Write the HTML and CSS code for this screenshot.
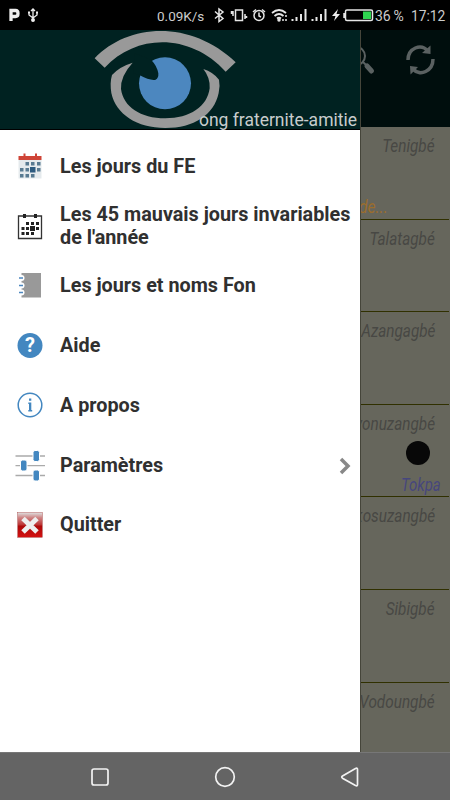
FILE: index.html
```html
<!DOCTYPE html>
<html lang="fr">
<head>
<meta charset="utf-8">
<title>ong fraternite-amitie</title>
<link rel="stylesheet" href="styles.css">
</head>
<body>
<div class="phone">
  <header class="status">
    <svg class="status-left" width="45" height="30" viewBox="0 0 45 30" fill="none" stroke="#eee" stroke-width="1.3">
      <path d="M11 21V10.500H15.500Q18 10.500 18 13.500T15.500 16.500H12" stroke-width="3.300"/>
      <path d="M33 10V20M29 12V15L33 18L37 15V12M31 11L33 9L35 11"/><circle cx="33" cy="20" r="1.300" fill="#eee"/><path d="M28 12.500H30M36 12.500H38" stroke-width="2"/>
    </svg>
    <span class="speed">0.09K/s</span>
    <svg class="status-icons" width="167" height="30" viewBox="208 0 167 30" fill="none" stroke="#e6e6e6" stroke-width="1.500">
      <path d="M215 11.500L223 18.500L219 21.500V9L223 12L215 18.500"/>
      <path d="M235.500 10H242.500V20.500H235.500ZM233 11V16M231.500 11V14M245 14V19M246.500 16V18"/>
      <circle cx="259" cy="15.500" r="5"/><path d="M259 12.500V16L261 17M253 12L256 9.500M265 12L262 9.500"/>
      <path d="M272 13Q279 7 286 13M274.500 16Q279 12 283.500 16M277 18.500Q279 17 281 18.500" stroke-width="1.800"/><circle cx="279" cy="20" r="1" fill="#eee"/><path d="M286 15V17M286 19V21M283 19V21"/>
      <path d="M292.500 19V21M296.500 17V21M301 14V21M305.500 9V21M312.500 19V21M316.500 17V21M321 14V21M325.500 9V21" stroke-width="2"/>
      <path d="M338 9L332 16H335.500L334 21L340 14H336.500Z" fill="#eee" stroke="none"/>
      <path d="M347 10H371Q372.500 10 372.500 11.500V19Q372.500 20.500 371 20.500H347Q345.500 20.500 345.500 19V11.500Q345.500 10 347 10ZM344 13V18"/>
      <path d="M363 11.500H371V19H363Z" fill="#2fd550" stroke="none"/>
    </svg>
    <span class="percent">36 %</span>
    <span class="time">17:12</span>
  </header>
  <main class="content">
    <aside class="drawer">
      <div class="banner">
        <svg class="eye" width="170" height="100" viewBox="0 15 510 300">
          <path fill="#999" d="M44 100C145 -6 333 -16 467 112L437 140C335 26 172 22 74 128Z"/>
          <path fill="#999" d="M158 113Q118 125 96 150C91 166 91 185 94 204C108 268 171 309 256 309C342 309 402 270 416 204Q421 183 417 164Q399 141 370 132Q391 158 389 190C382 245 330 280 256 280C181 280 130 245 123 192Q121 153 158 113Z"/>
          <circle cx="255" cy="175" r="78" fill="#4c87bf"/>
          <path fill="#002221" d="M165 85L213 104Q231 122 235 145Q236 160 227 164Q211 168 178 150L160 145Z"/>
        </svg>
        <span class="brand">ong fraternite-amitie</span>
      </div>
      <nav class="menu">
        <a class="item">
          <svg class="icon" viewBox="0 0 30 30"><path fill="#e5eaed" d="M3.500 9H26.500V27.500H3.500Z"/><path fill="#cf4437" d="M3.500 5H26.500V9H3.500ZM8.500 2.500H10.500V6H8.500ZM20 2.500H22V6H20Z"/><path fill="#587a91" d="M10.500 11H14V14.500H10.500ZM16 11H19.500V14.500H16ZM22 11H25.500V14.500H22ZM5 17H8.500V20.500H5ZM10.500 17H14V20.500H10.500ZM22 17H25.500V20.500H22ZM5 23H8.500V26.500H5ZM10.500 23H14V26.500H10.500ZM16 23H19.500V26.500H16Z"/><path fill="#2d5b80" d="M15 16H20.500V21.500H15Z"/></svg>
          <span>Les jours du FE</span></a>
        <a class="item">
          <svg class="icon" viewBox="0 0 30 30"><path fill="none" stroke="#333" stroke-width="1.300" d="M3.500 5H26.500V27.500H3.500Z"/><path fill="#222" d="M8 3H11V7H8ZM19 3H22V7H19ZM11 11H14V14H11ZM16 11H19V14H16ZM21 11H24V14H21ZM6.500 16H9.500V19H6.500ZM11 16H14V19H11ZM15 15H20V20H15ZM21 16H24V19H21ZM6.500 21H9.500V24H6.500ZM11 21H14V24H11ZM16 21H19V24H16Z"/></svg>
          <span>Les 45 mauvais jours invariables de l'année</span></a>
        <a class="item">
          <svg class="icon" viewBox="0 0 30 30"><path fill="#999" d="M6.500 3H26V27.500H6.500Z"/><g fill="#fff"><circle cx="6.500" cy="8" r="3"/><circle cx="6.500" cy="15.500" r="3"/><circle cx="6.500" cy="22.500" r="3"/></g><path stroke="#4c87bf" stroke-width="1.600" d="M4 8H8M4 15.500H8M4 22.500H8"/></svg>
          <span>Les jours et noms Fon</span></a>
        <a class="item">
          <svg class="icon" viewBox="0 0 30 30"><circle cx="15" cy="15.500" r="12.500" fill="#4387c0"/><text class="question" x="15" y="22">?</text></svg>
          <span>Aide</span></a>
        <a class="item">
          <svg class="icon" viewBox="0 0 30 30"><circle cx="15" cy="15" r="11.800" fill="#fff" stroke="#4387c0" stroke-width="1.500"/><path fill="#4387c0" d="M14 8.500H16.300V10.800H14ZM13.300 12.500H16.300V20H17.200V21.500H13.300V20H14V14H13.300Z"/></svg>
          <span>A propos</span></a>
        <a class="item">
          <svg class="icon" viewBox="0 0 30 30"><path stroke="#aaa" stroke-width="1.300" d="M.5 6H30M.5 15.700H30M.5 25.500H30"/><g fill="#4387c0" stroke="#fff"><rect x="18" y=".5" width="6.500" height="11" rx="2"/><rect x="5.500" y="10" width="6.500" height="11" rx="2"/><rect x="18" y="20" width="6.500" height="11" rx="2"/></g></svg>
          <span>Paramètres</span>
          <svg class="chevron" width="14" height="18" viewBox="0 0 14 18"><path d="M3 2L10 9L3 16" fill="none" stroke="#888" stroke-width="3.500"/></svg></a>
        <a class="item">
          <svg class="icon" viewBox="0 0 30 30"><defs><linearGradient id="red" x2="0" y2="1"><stop offset="0" stop-color="#ddd"/><stop offset=".2" stop-color="#cf8585"/><stop offset=".48" stop-color="#bd3838"/><stop offset=".55" stop-color="#ad0909"/><stop offset="1" stop-color="#d31111"/></linearGradient></defs><rect x="2.700" y="2.700" width="24.600" height="24.600" fill="url(#red)" stroke="#a55" stroke-width=".5"/><path stroke="#eee" stroke-width="5" d="M8 8.500L22 22M22 8.500L8 22"/></svg>
          <span>Quitter</span></a>
      </nav>
    </aside>
    <section class="backdrop">
      <div class="toolbar">
        <svg width="90" height="97" viewBox="360 30 90 97" fill="none" stroke="#5a6161"><circle cx="356" cy="56" r="9" stroke-width="2"/><path d="M363 62L367 66" stroke-width="2"/><path d="M367 66L371.500 71" stroke-width="5" stroke-linecap="round"/><path d="M408 60C408 48 421 43 428 51M433 59C433 71 420 77 413 69" stroke-width="3.500"/><path d="M422 53L430.500 45.500V54ZM410 66L418 67L410.500 74.500Z" fill="#5a6161" stroke="none"/></svg>
      </div>
      <div class="day"><span class="name">Tenigbé</span><span class="note">de...</span></div>
      <div class="day"><span class="name">Talatagbé</span></div>
      <div class="day"><span class="name">Azangagbé</span></div>
      <div class="day"><span class="name">yonuzangbé</span><i class="moon"></i><span class="market">Tokpa</span></div>
      <div class="day"><span class="name">kosuzangbé</span></div>
      <div class="day"><span class="name">Sibigbé</span></div>
      <div class="day last"><span class="name">Vodoungbé</span></div>
    </section>
  </main>
  <footer class="navbar">
    <svg width="22" height="22" viewBox="0 0 22 22"><rect x="3" y="3" width="16" height="16" rx="2"/></svg>
    <svg width="22" height="22" viewBox="0 0 22 22"><circle cx="11" cy="11" r="9.300"/></svg>
    <svg width="22" height="22" viewBox="0 0 22 22"><path d="M18.500 3.500V18.500Q18.500 20.500 16.500 19.500L3.500 12.200Q2 11 3.500 10L16.500 2.500Q18.500 1.500 18.500 3.500Z"/></svg>
  </footer>
</div>
</body>
</html>
```
FILE: styles.css
```css
* { box-sizing: border-box; }
body { margin: 0; font-family: Roboto, sans-serif; background: #000; }
.phone { width: 450px; height: 800px; display: grid; grid-template-rows: 30px 722px 48px; overflow: hidden; }
.status { display: flex; align-items: center; background: #000; color: #ccc; font-size: 14px; line-height: 30px; white-space: nowrap; }
.status svg { flex: none; }
.speed { width: 51px; margin-left: 112px; padding-top: 1px; font-size: 13.5px; }
.status-icons { position: relative; }
.percent { width: 36px; padding-top: 1px; letter-spacing: -.2px; }
.time { padding-top: 1px; font-size: 13.8px; }
.content { display: grid; grid-template-columns: 360px 90px; min-height: 0; }
.drawer { background: #fff; min-width: 0; }
.banner { position: relative; height: 100px; background: #002221; border-bottom: 1px solid #000; padding-left: 80px; }
.eye { display: block; }
.brand { position: absolute; right: 3px; bottom: -2px; font-size: 17.5px; line-height: 21px; color: #c8cdcd; white-space: nowrap; }
.menu { padding-top: 6px; display: grid; grid-auto-rows: 59.8px; }
.item { display: flex; align-items: center; padding-left: 15px; color: #303030; font-size: 19.8px; font-weight: 700; line-height: 23.5px; }
.icon { width: 30px; height: 30px; flex: none; margin-right: 15px; overflow: visible; }
.item span { flex: 1; padding-top: 1px; white-space: normal; }
.chevron { margin: 2px 8px 0 0; flex: none; }
.question { font-size: 20px; font-weight: 700; fill: #fff; text-anchor: middle; }
.backdrop { min-width: 0; overflow: hidden; background: #66665c; border-left: 1px solid #45453a; }
.toolbar { height: 97px; background: #000e0d; margin-left: -1px; }
.toolbar svg { display: block; }
.day { position: relative; height: 92.6px; margin-right: 1px; padding: 8px 14px 0 0; border-bottom: 1px solid #303000; display: flex; justify-content: flex-end; align-items: flex-start; font-style: italic; font-size: 18px; line-height: 22px; white-space: nowrap; }
.last { border: 0; }
.name { color: #484844; transform: scaleX(.85); transform-origin: right; flex: none; }
.note { position: absolute; left: -2px; bottom: 1px; color: #9b6d2d; transform: scaleX(.87); transform-origin: left; }
.moon { position: absolute; right: 19px; top: 36px; width: 24px; height: 24px; border-radius: 50%; background: #080808; }
.market { position: absolute; right: 8px; bottom: 0; color: #46467d; transform: scaleX(.83); transform-origin: right; }
.navbar { background: #646464; display: flex; justify-content: center; align-items: center; gap: 103px; border-top: 1px solid #777; }
.navbar svg { fill: none; stroke: #f2f2f2; stroke-width: 1.7; }
```
